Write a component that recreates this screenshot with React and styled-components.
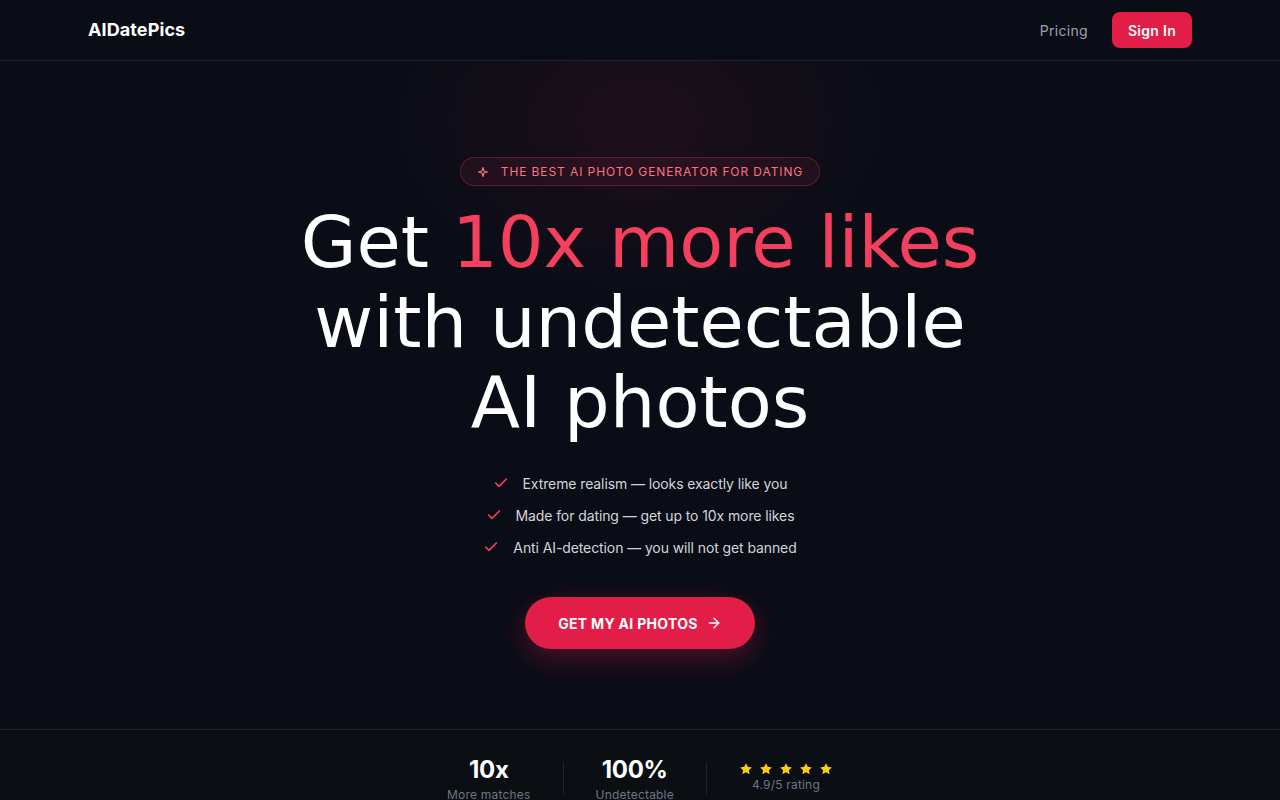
import React from "react";
import styled, { createGlobalStyle } from "styled-components";

const Global = createGlobalStyle`
  html, body { margin: 0; padding: 0; background: #0a0d16; }
  body { font-family: Inter, "Noto Sans", sans-serif; color: #fff; -webkit-font-smoothing: antialiased; }
  * { box-sizing: border-box; }
`;

const Page = styled.div`
  min-height: 800px;
  background: #0a0d16;
  overflow: hidden;
`;

const Header = styled.header`
  height: 61px;
  border-bottom: 1px solid #1c212b;
  display: flex;
  align-items: center;
  justify-content: space-between;
  padding: 0 88px;
`;

const Logo = styled.div`
  font-size: 18px;
  font-weight: 700;
  letter-spacing: 0.1px;
  color: #fff;
  margin-top: -2px;
`;

const Nav = styled.nav`
  display: flex;
  align-items: center;
  gap: 24px;
`;

const NavLink = styled.a`
  font-size: 14px;
  color: #9ca3af;
  text-decoration: none;
  letter-spacing: 0.3px;
`;

const SignIn = styled.button`
  height: 36px;
  width: 80px;
  border: 0;
  border-radius: 8px;
  background: #e11d48;
  color: #fff;
  font-family: inherit;
  font-size: 14px;
  font-weight: 600;
  letter-spacing: 0.3px;
`;

const Hero = styled.section`
  position: relative;
  display: flex;
  flex-direction: column;
  align-items: center;
  padding: 96px 0 80px;
  background: radial-gradient(ellipse 260px 180px at 50% 60px, rgba(225, 29, 72, 0.09), rgba(225, 29, 72, 0) 100%);
`;

const Badge = styled.div`
  display: flex;
  align-items: center;
  gap: 12px;
  height: 29px;
  padding: 0 16px;
  border-radius: 999px;
  border: 1px solid rgba(244, 63, 94, 0.28);
  background: rgba(244, 63, 94, 0.08);
  color: #fb7185;
  font-size: 12px;
  font-weight: 400;
  letter-spacing: 0.9px;
  text-transform: uppercase;
`;

const Heading = styled.h1`
  margin: 16px 0 0;
  font-family: "DejaVu Sans", sans-serif;
  font-weight: 400;
  font-size: 72px;
  line-height: 80px;
  text-align: center;
  color: #fff;
`;

const Accent = styled.span`
  color: #f43f5e;
`;

const Checks = styled.ul`
  list-style: none;
  margin: 29px 0 0;
  padding: 0;
  display: flex;
  flex-direction: column;
  align-items: center;
  gap: 8px;
`;

const CheckItem = styled.li`
  display: flex;
  align-items: center;
  gap: 14px;
  height: 24px;
  font-size: 14px;
  letter-spacing: -0.1px;
  color: #d1d5db;
`;

const Cta = styled.button`
  margin-top: 38px;
  width: 230px;
  height: 52px;
  border: 0;
  border-radius: 999px;
  background: #e11d48;
  color: #fff;
  font-family: inherit;
  font-size: 14px;
  font-weight: 700;
  letter-spacing: 0.3px;
  display: flex;
  align-items: center;
  justify-content: center;
  gap: 8px;
  box-shadow: 0 10px 28px rgba(225, 29, 72, 0.3);
`;

const Stats = styled.section`
  border-top: 1px solid #1a1f28;
  background: #0b0e13;
  display: flex;
  justify-content: center;
  padding: 28px 0 20px;
`;

const StatRow = styled.div`
  display: flex;
  align-items: flex-start;
  gap: 32px;
`;

const Stat = styled.div`
  display: flex;
  flex-direction: column;
  align-items: center;
  padding-top: ${(p) => p.$pt || 0}px;
`;

const StatValue = styled.div`
  font-size: 24px;
  font-weight: 700;
  line-height: 24px;
  color: #fff;
  letter-spacing: -0.3px;
`;

const StatLabel = styled.div`
  margin-top: ${(p) => p.$mt ?? 5}px;
  font-size: 12px;
  line-height: 16px;
  letter-spacing: 0.2px;
  color: #6b7686;
`;

const Divider = styled.div`
  width: 1px;
  height: 32px;
  margin-top: 4px;
  background: #1f2530;
`;

const Stars = styled.div`
  display: flex;
  gap: 6px;
`;

const Sparkle = () => (
  <svg width="12" height="12" viewBox="0 0 24 24" fill="none" stroke="#fb7185" strokeWidth="2.2" strokeLinejoin="round">
    <path d="M12 3 L14 10 L21 12 L14 14 L12 21 L10 14 L3 12 L10 10 Z" />
  </svg>
);

const Check = () => (
  <svg width="16" height="16" viewBox="0 0 24 24" fill="none" stroke="#f43f5e" strokeWidth="2.5" strokeLinecap="round" strokeLinejoin="round">
    <path d="M20 6 9 17l-5-5" />
  </svg>
);

const Arrow = () => (
  <svg width="16" height="16" viewBox="0 0 24 24" fill="none" stroke="#fff" strokeWidth="2.2" strokeLinecap="round" strokeLinejoin="round">
    <path d="M5 12h14" />
    <path d="m12 5 7 7-7 7" />
  </svg>
);

const Star = () => (
  <svg width="14" height="14" viewBox="0 0 24 24" fill="#facc15">
    <path d="M12 2l3.09 6.26L22 9.27l-5 4.87 1.18 6.88L12 17.77l-6.18 3.25L7 14.14 2 9.27l6.91-1.01L12 2z" />
  </svg>
);

const checks = [
  "Extreme realism — looks exactly like you",
  "Made for dating — get up to 10x more likes",
  "Anti AI-detection — you will not get banned",
];

export default function App() {
  return (
    <Page>
      <Global />
      <Header>
        <Logo>AIDatePics</Logo>
        <Nav>
          <NavLink href="#">Pricing</NavLink>
          <SignIn>Sign In</SignIn>
        </Nav>
      </Header>
      <Hero>
        <Badge>
          <Sparkle />
          <span>The best AI photo generator for dating</span>
        </Badge>
        <Heading>
          Get <Accent>10x more likes</Accent>
          <br />
          with undetectable
          <br />
          AI photos
        </Heading>
        <Checks>
          {checks.map((c) => (
            <CheckItem key={c}>
              <Check />
              <span>{c}</span>
            </CheckItem>
          ))}
        </Checks>
        <Cta>
          GET MY AI PHOTOS <Arrow />
        </Cta>
      </Hero>
      <Stats>
        <StatRow>
          <Stat>
            <StatValue>10x</StatValue>
            <StatLabel>More matches</StatLabel>
          </Stat>
          <Divider />
          <Stat>
            <StatValue>100%</StatValue>
            <StatLabel>Undetectable</StatLabel>
          </Stat>
          <Divider />
          <Stat $pt={4}>
            <Stars>
              <Star />
              <Star />
              <Star />
              <Star />
              <Star />
            </Stars>
            <StatLabel $mt={1}>4.9/5 rating</StatLabel>
          </Stat>
        </StatRow>
      </Stats>
    </Page>
  );
}
